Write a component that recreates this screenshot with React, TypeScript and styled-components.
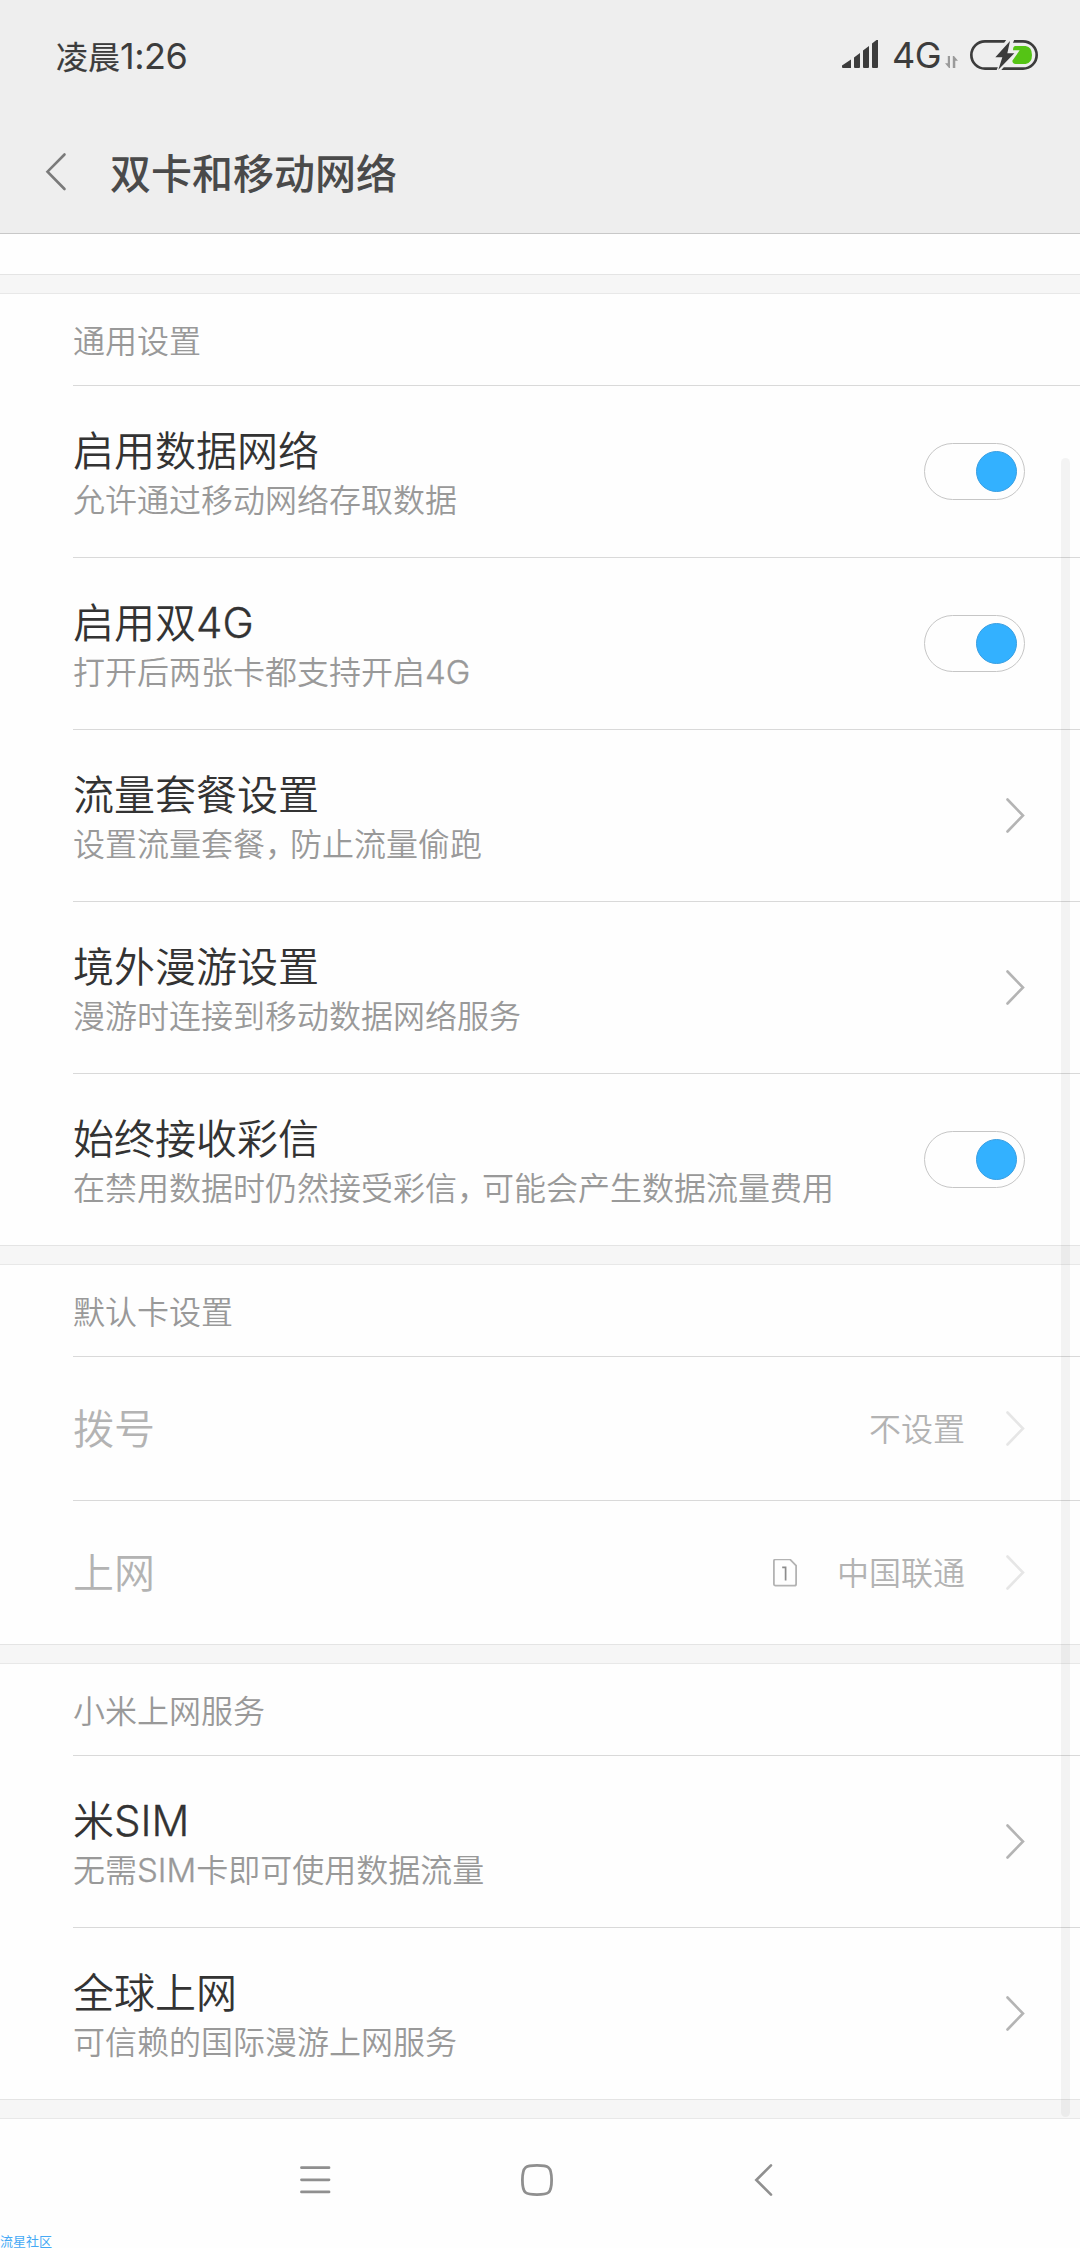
import React from "react";
import styled, { createGlobalStyle } from "styled-components";

const GlobalStyle = createGlobalStyle`
  *, *::before, *::after { box-sizing: border-box; }
  html, body { margin: 0; padding: 0; background: #fefefe; }
  body {
    font-family: "Noto Sans CJK SC", "Noto Sans", sans-serif;
    -webkit-font-smoothing: antialiased;
  }
`;

const Screen = styled.div`
  position: relative;
  display: flex;
  flex-direction: column;
  width: 1080px;
  height: 2248px;
  overflow: hidden;
  background: #fefefe;
`;

const Header = styled.header`
  height: 234px;
  flex: none;
  display: flex;
  flex-direction: column;
  background: #eeeeee;
  border-bottom: 1px solid #c8c8c8;
`;

const StatusBar = styled.div`
  height: 110px;
  display: flex;
  justify-content: space-between;
  padding: 0 41px 0 56px;
  color: #3c3c3c;
`;

const Clock = styled.div`
  font-size: 32px;
  line-height: 36px;
  padding-top: 37px;
  font-weight: 400;
  white-space: nowrap;
  -webkit-text-stroke: 0.2px currentColor;
`;

const Latin = styled.span<{ $size: number; $weight?: number; $spacing?: number }>`
  font-family: Inter, "Liberation Sans", sans-serif;
  font-size: ${(p) => p.$size}px;
  font-weight: ${(p) => p.$weight ?? 300};
  letter-spacing: ${(p) => p.$spacing ?? 0}px;
  line-height: 1;
  -webkit-text-stroke: ${(p) => (p.$weight ? 0 : 0.35)}px currentColor;
`;

const StatusIcons = styled.div`
  display: flex;
  align-items: flex-start;
  padding-top: 38px;
  svg { display: block; flex: none; }
`;

const Network = styled.div`
  width: 53px;
  margin-left: 13px;
  height: 34px;
  display: flex;
  align-items: center;
`;

const BatterySlot = styled.div`
  margin-left: 11px;
`;

const TitleBar = styled.div`
  flex: 1;
  display: flex;
  align-items: flex-start;
  padding: 42px 0 0 45px;
`;

const PageTitle = styled.h1`
  margin: -2px 0 0 42px;
  font-size: 41px;
  line-height: 42px;
  font-weight: 500;
  color: #4a4a4a;
`;

const Content = styled.main`
  flex: none;
  display: flex;
  flex-direction: column;
  padding-top: 40px;
`;

const Band = styled.div`
  height: 20px;
  background: #f6f6f6;
  border-top: 1px solid #e4e4e4;
  border-bottom: 1px solid #e8e8e8;
`;

const Section = styled.section`
  padding-left: 73px;
`;

const SectionTitle = styled.h2`
  margin: 0;
  height: 91px;
  font-size: 32px;
  line-height: 90px;
  font-weight: 350;
  color: #999999;
`;

const Row = styled.div<{ $compact?: boolean }>`
  height: ${(p) => (p.$compact ? 144 : 172)}px;
  border-top: 1px solid #d9d9d9;
  display: flex;
  align-items: center;
  justify-content: space-between;
  padding-right: 55px;
`;

const Labels = styled.div`
  display: flex;
  flex-direction: column;
  white-space: nowrap;
`;

const Label = styled.div<{ $muted?: boolean }>`
  height: 52px;
  font-size: 41px;
  line-height: ${(p) => (p.$muted ? 47 : 50)}px;
  font-weight: 350;
  color: ${(p) => (p.$muted ? "#b3b3b3" : "#333333")};
`;

const Summary = styled.div`
  font-size: 32px;
  line-height: 46px;
  font-weight: 350;
  color: #999999;
`;

const Comma = styled.span`
  display: inline-block;
  width: 25px;
  font-feature-settings: "halt";
`;

const Trailing = styled.div`
  display: flex;
  align-items: center;
`;

const Value = styled.span`
  height: 46px;
  font-size: 32px;
  line-height: 43px;
  font-weight: 350;
  color: #b3b3b3;
  margin-right: 40px;
`;

const Switch = styled.div`
  width: 101px;
  height: 57px;
  border: 1px solid #c6c6c6;
  border-radius: 29px;
  display: flex;
  align-items: center;
  justify-content: flex-end;
  padding-right: 7px;
`;

const Knob = styled.div`
  width: 41px;
  height: 41px;
  border-radius: 50%;
  background: #33b1ff;
  border: 1px solid #3a9fe2;
`;

const Scrollbar = styled.div`
  position: absolute;
  left: 1061px;
  top: 458px;
  width: 9px;
  height: 1659px;
  border-radius: 5px;
  background: rgba(0, 0, 0, 0.043);
`;

const NavBar = styled.nav`
  flex: 1;
  display: flex;
  align-items: flex-start;
  padding: 44px 0 0 298px;
  svg { display: block; }
`;

const NavItem = styled.div<{ $gap?: number }>`
  width: 34px;
  height: 34px;
  margin-left: ${(p) => p.$gap ?? 0}px;
`;

const Watermark = styled.div`
  position: absolute;
  left: 0;
  top: 2234px;
  font-size: 13px;
  line-height: 14px;
  color: #45a9f5;
  white-space: nowrap;
`;

const SimSlot = styled.div`
  margin-right: 40px;
  svg { display: block; }
`;

const Chevron = ({ muted }: { muted?: boolean }) => (
  <svg width="20" height="36" viewBox="0 0.5 20 36" fill="none">
    <path
      d="M2.5 2 L18 18 L2.5 34"
      stroke={muted ? "#e6e6e6" : "#b4b4b4"}
      strokeWidth="2.6"
      strokeLinecap="round"
    />
  </svg>
);

const SignalIcon = () => (
  <svg width="37" height="34" viewBox="0 0 37 34" fill="#3c3c3c">
    <path d="M0 27.5 L9 21.5 V30 H1 Q0 30 0 29Z" />
    <path d="M12 19.5 L18 15 V29 Q18 30 17 30 H13 Q12 30 12 29Z" />
    <path d="M21 12.5 L27 8 V29 Q27 30 26 30 H22 Q21 30 21 29Z" />
    <path d="M30 5.5 L34.5 2 H36 V29 Q36 30 35 30 H31 Q30 30 30 29Z" />
  </svg>
);

const DataArrows = () => (
  <svg width="13" height="34" viewBox="0 0 13 34" fill="#9a9a9a">
    <path d="M2.8 18 H5 V30 H4 L0 25.3 H2.8Z" />
    <path d="M7.8 30 V18 H9 L13 22.8 H10.3 V30Z" />
  </svg>
);

const BatteryIcon = () => (
  <svg width="70" height="34" viewBox="510 114 210 102" fill="none">
    <rect x="517" y="124" width="196" height="82" rx="41" stroke="#3c3c3c" strokeWidth="8" />
    <path d="M624 116 L586 172 H609 L592 212 H605 L654 155 H631 L647 116Z" fill="#eeeeee" />
    <path d="M633 123 L589 172 H610 L598 209 L646 160 H625Z" fill="#3c3c3c" />
    <path
      d="M648 138 H680 Q699 141 699 165 Q699 189 680 192 H650 Q640 191 640 182 L662 151 H642 Q642 139 648 138Z"
      fill="#55c415"
    />
  </svg>
);

const BackIcon = () => (
  <svg width="23" height="40" viewBox="0 0 23 40" fill="none">
    <path d="M19.5 2.5 L2.5 19.7 L19.5 37" stroke="#7a7a7a" strokeWidth="2.6" strokeLinecap="round" />
  </svg>
);

const SimIcon = () => (
  <svg width="24" height="28" viewBox="0 0.5 24 28" fill="none">
    <path
      d="M2.5 .9 H17 L23.1 7 V25.4 Q23.1 27.1 21.4 27.1 H2.6 Q.9 27.1 .9 25.4 V2.6 Q.9 .9 2.5 .9Z"
      stroke="#b3b3b3"
      strokeWidth="1.8"
    />
    <path d="M9.2 8.8 H12.6 V22" stroke="#8c8c8c" strokeWidth="1.7" />
  </svg>
);

type Item = {
  label: React.ReactNode;
  summary: React.ReactNode;
  toggle?: boolean;
};

const general: Item[] = [
  { label: "启用数据网络", summary: "允许通过移动网络存取数据", toggle: true },
  {
    label: <>启用双<Latin $size={42}>4G</Latin></>,
    summary: <>打开后两张卡都支持开启<Latin $size={33}>4G</Latin></>,
    toggle: true,
  },
  { label: "流量套餐设置", summary: <>设置流量套餐<Comma>，</Comma>防止流量偷跑</> },
  { label: "境外漫游设置", summary: "漫游时连接到移动数据网络服务" },
  {
    label: "始终接收彩信",
    summary: <>在禁用数据时仍然接受彩信<Comma>，</Comma>可能会产生数据流量费用</>,
    toggle: true,
  },
];

const services: Item[] = [
  {
    label: <>米<Latin $size={42}>SIM</Latin></>,
    summary: <>无需<Latin $size={33}>SIM</Latin>卡即可使用数据流量</>,
  },
  { label: "全球上网", summary: "可信赖的国际漫游上网服务" },
];

const SettingRow = ({ item }: { item: Item }) => (
  <Row>
    <Labels>
      <Label>{item.label}</Label>
      <Summary>{item.summary}</Summary>
    </Labels>
    {item.toggle ? <Switch><Knob /></Switch> : <Chevron />}
  </Row>
);

export default function App() {
  return (
    <>
      <GlobalStyle />
      <Screen lang="zh-CN">
        <Header>
          <StatusBar>
            <Clock>凌晨<Latin $size={36} $weight={400} $spacing={-0.5}>1:26</Latin></Clock>
            <StatusIcons>
              <SignalIcon />
              <Network><Latin $size={36} $weight={400} $spacing={-0.5}>4G</Latin></Network>
              <DataArrows />
              <BatterySlot><BatteryIcon /></BatterySlot>
            </StatusIcons>
          </StatusBar>
          <TitleBar>
            <BackIcon />
            <PageTitle>双卡和移动网络</PageTitle>
          </TitleBar>
        </Header>
        <Content>
          <Band />
          <Section>
            <SectionTitle>通用设置</SectionTitle>
            {general.map((item, i) => <SettingRow key={i} item={item} />)}
          </Section>
          <Band />
          <Section>
            <SectionTitle>默认卡设置</SectionTitle>
            <Row $compact>
              <Label $muted>拨号</Label>
              <Trailing><Value>不设置</Value><Chevron muted /></Trailing>
            </Row>
            <Row $compact>
              <Label $muted>上网</Label>
              <Trailing>
                <SimSlot><SimIcon /></SimSlot>
                <Value>中国联通</Value>
                <Chevron muted />
              </Trailing>
            </Row>
          </Section>
          <Band />
          <Section>
            <SectionTitle>小米上网服务</SectionTitle>
            {services.map((item, i) => <SettingRow key={i} item={item} />)}
          </Section>
          <Band />
        </Content>
        <NavBar>
          <NavItem>
            <svg width="34" height="34" viewBox="0 0 34 34" stroke="#8f8f8f" strokeWidth="2.8" strokeLinecap="round">
              <path d="M3.5 4.7 H31 M3.5 16.8 H31 M3.5 28.9 H31" />
            </svg>
          </NavItem>
          <NavItem $gap={188}>
            <svg width="34" height="34" viewBox="0 0 34 34" fill="none" stroke="#8f8f8f" strokeWidth="2.8">
              <path d="M17 2.4 C28 2.4 31.6 3 31.6 17 C31.6 31 28 31.6 17 31.6 C6 31.6 2.4 31 2.4 17 C2.4 3 6 2.4 17 2.4Z" />
            </svg>
          </NavItem>
          <NavItem $gap={199}>
            <svg width="34" height="34" viewBox="0 0 34 34" fill="none" stroke="#8f8f8f" strokeWidth="2.6" strokeLinecap="round">
              <path d="M18 2.3 L3.3 17 L18 31.7" />
            </svg>
          </NavItem>
        </NavBar>
        <Scrollbar />
        <Watermark>流星社区</Watermark>
      </Screen>
    </>
  );
}
